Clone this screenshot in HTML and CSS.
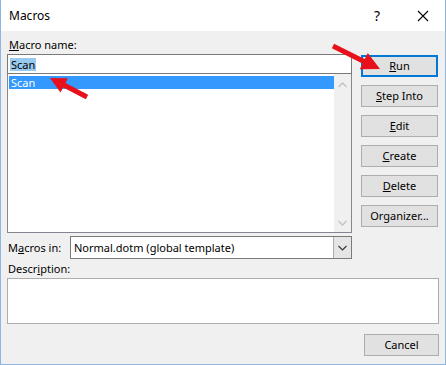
FILE: index.html
```html
<!DOCTYPE html>
<html lang="en">
<head>
  <meta charset="UTF-8" />
  <title>Macros</title>
  <link rel="stylesheet" href="styles.css">
</head>
<body>

  <div class="window">
    <div class="titlebar">
      <span class="title">Macros</span>
      <span class="help">?</span>
      <svg class="close" width="12" height="12" viewBox="0 0 12 12">
        <path d="M1 1 L11 11 M11 1 L1 11" stroke="#000" stroke-width="1.1" fill="none" />
      </svg>
    </div>

    <div class="content">
      <div class="label name-label"><u>M</u>acro name:</div>

      <div class="main">
        <div class="left">
          <div class="name-input"><span class="sel-text">Scan</span></div>
          <div class="list">
            <div class="rows">
              <div class="row selected">Scan</div>
            </div>
            <div class="scrollbar">
              <svg width="9" height="6" viewBox="0 0 9 6"><path d="M0.5 5 L4.5 1 L8.5 5" stroke="#c2c2c2" stroke-width="1.3" fill="none" /></svg>
              <svg width="9" height="6" viewBox="0 0 9 6"><path d="M0.5 1 L4.5 5 L8.5 1" stroke="#c2c2c2" stroke-width="1.3" fill="none" /></svg>
            </div>
          </div>
        </div>

        <div class="buttons">
          <button class="btn default"><u>R</u>un</button>
          <button class="btn"><u>S</u>tep Into</button>
          <button class="btn"><u>E</u>dit</button>
          <button class="btn"><u>C</u>reate</button>
          <button class="btn"><u>D</u>elete</button>
          <button class="btn">Or<u>g</u>anizer...</button>
        </div>
      </div>

      <div class="macros-in">
        <span class="label">M<u>a</u>cros in:</span>
        <div class="select">
          <span class="select-value">Normal.dotm (global template)</span>
          <span class="select-btn">
            <svg width="9" height="6" viewBox="0 0 9 6"><path d="M0.5 1 L4.5 5 L8.5 1" stroke="#333" stroke-width="1.1" fill="none" /></svg>
          </span>
        </div>
      </div>

      <div class="label desc-label">Descr<u>i</u>ption:</div>
      <div class="description"></div>

      <div class="footer">
        <button class="btn cancel">Cancel</button>
      </div>
    </div>

    <svg class="arrows" width="446" height="365" viewBox="0 0 446 365">
      <line x1="333" y1="46" x2="365" y2="62" stroke="#e8101a" stroke-width="5" />
      <polygon points="380,69 359.8,69.2 367.8,53" fill="#e8101a" />
      <line x1="87" y1="97" x2="62" y2="84" stroke="#e8101a" stroke-width="5" />
      <polygon points="50,78 67.9,78.2 60.5,92.4" fill="#e8101a" />
    </svg>
  </div>

</body>
</html>
```

FILE: styles.css
```css
body {
  margin: 0;
  font-family: 'Noto Sans', 'Open Sans', sans-serif;
  font-size: 11px;
  color: #000;
  background: #fff;
}
.window {
  position: relative;
  width: 446px;
  height: 365px;
  box-sizing: border-box;
  background: #f0f0f0;
  border: 1px solid #8fb6e3;
  border-top: none;
  overflow: hidden;
}
.titlebar {
  height: 31px;
  background: #fff;
  display: flex;
  align-items: center;
  padding-left: 8px;
}
.title {
  font-size: 12px;
  flex: 1;
}
.help {
  font-size: 14px;
  margin-right: 37px;
}
.close {
  margin-right: 16px;
}
.content {
  padding: 6px 6px 0 6px;
}
.label {
  line-height: 15px;
}
.name-label {
  margin-left: 2px;
  margin-bottom: 2px;
}
.main {
  display: flex;
  gap: 9px;
}
.left {
  width: 345px;
}
.name-input {
  height: 18px;
  background: #fff;
  border: 1px solid #7a7a7a;
  padding-left: 2px;
  display: flex;
  align-items: center;
}
.sel-text {
  background: #99c9ef;
  line-height: 13px;
  padding: 0 1px;
}
.list {
  height: 158px;
  background: #fff;
  border: 1px solid #828790;
  border-top: none;
  display: flex;
}
.rows {
  flex: 1;
  padding: 2px 0 0 1px;
}
.row {
  height: 13px;
  line-height: 13px;
  padding-left: 2px;
}
.row.selected {
  background: #3399ff;
  color: #fff;
}
.scrollbar {
  width: 17px;
  background: #f0f0f0;
  display: flex;
  flex-direction: column;
  justify-content: space-between;
  align-items: center;
  padding: 8px 0 6px;
}
.buttons {
  display: flex;
  flex-direction: column;
  gap: 8px;
  padding-top: 1px;
}
.btn {
  width: 77px;
  height: 22px;
  box-sizing: border-box;
  background: #e1e1e1;
  border: 1px solid #adadad;
  font-family: 'Noto Sans', 'Open Sans', sans-serif;
  font-size: 11px;
  color: #000;
  padding: 0;
  line-height: 18px;
}
.btn.default {
  border: 2px solid #0078d7;
}
.macros-in {
  display: flex;
  align-items: center;
  margin-top: 3px;
}
.macros-in .label {
  width: 62px;
  margin-left: 1px;
}
.select {
  width: 280px;
  height: 21px;
  background: #fff;
  border: 1px solid #7a7a7a;
  display: flex;
  align-items: center;
}
.select-value {
  flex: 1;
  padding-left: 3px;
}
.select-btn {
  width: 17px;
  height: 21px;
  background: #e5e5e5;
  border-left: 1px solid #adadad;
  display: flex;
  align-items: center;
  justify-content: center;
}
.desc-label {
  margin: 2px 0 2px 1px;
}
.description {
  height: 44px;
  width: 430px;
  background: #fff;
  border: 1px solid #adadad;
}
.footer {
  display: flex;
  justify-content: flex-end;
  margin-top: 10px;
  padding-right: 0;
}
.cancel {
  width: 75px;
}
.arrows {
  position: absolute;
  left: -1px;
  top: 0;
  pointer-events: none;
}
```
